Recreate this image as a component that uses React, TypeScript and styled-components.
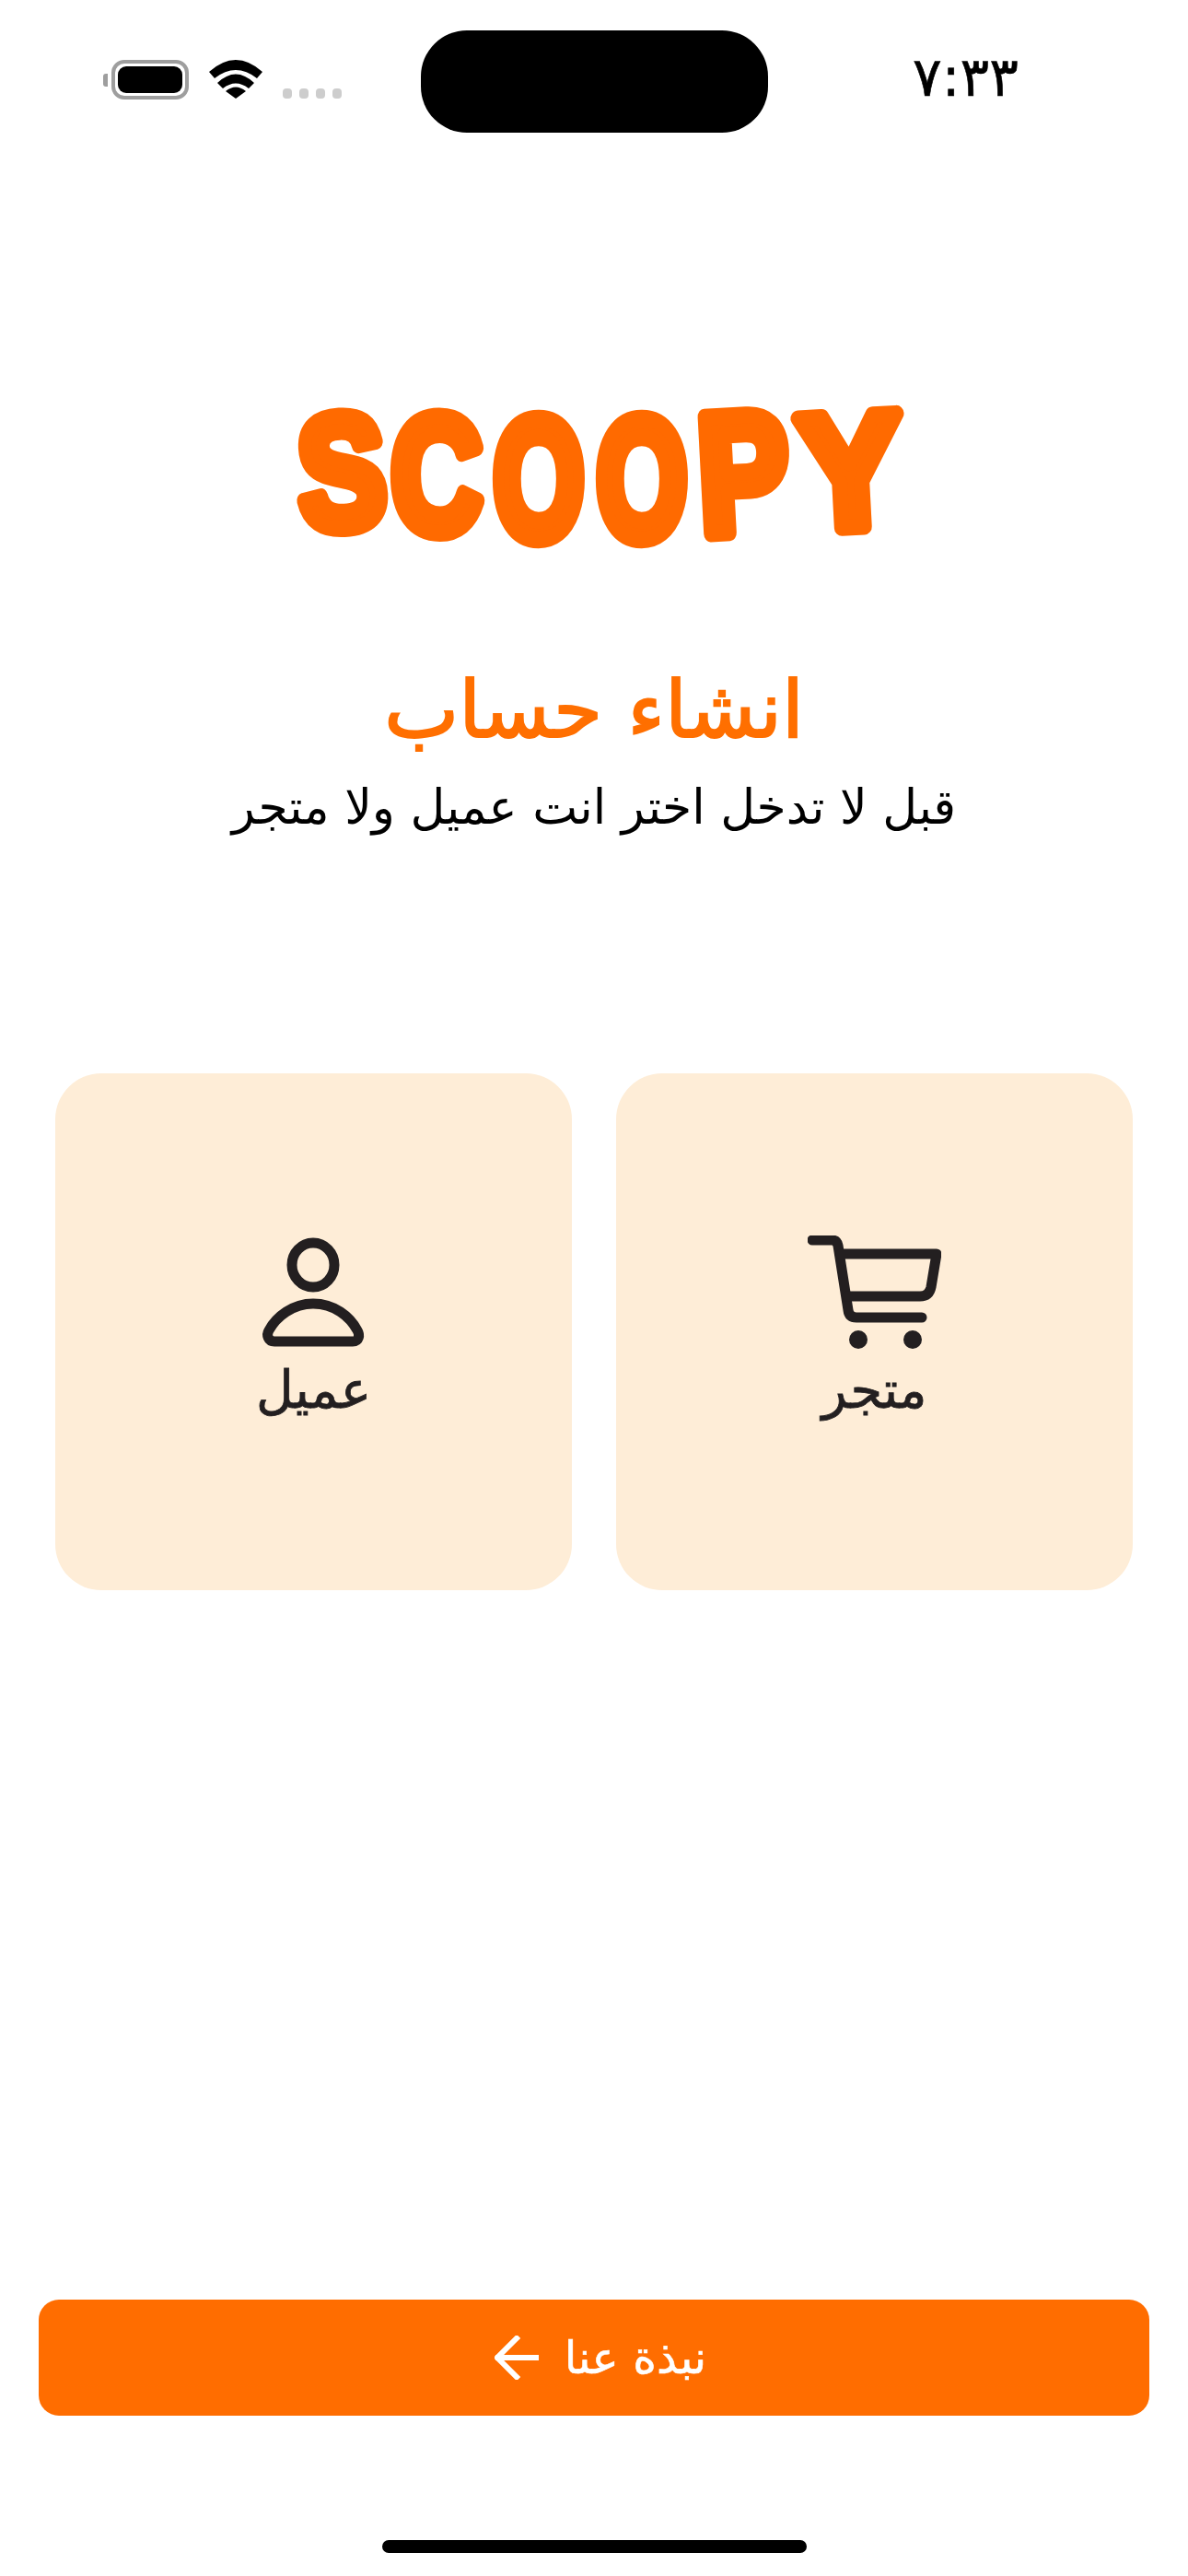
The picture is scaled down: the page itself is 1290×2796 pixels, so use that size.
import React from "react";
import styled, { createGlobalStyle } from "styled-components";

const GlobalStyle = createGlobalStyle`
  html, body {
    margin: 0;
    padding: 0;
    background: #ffffff;
  }
`;

const LOGO_LETTERS = [
  { ch: "S", cx: 46, cy: 73, sx: 1.42, sy: 1.74, rot: -3 },
  { ch: "C", cx: 149, cy: 75, sx: 1.36, sy: 1.8, rot: 0 },
  { ch: "O", cx: 260, cy: 80, sx: 1.26, sy: 1.86, rot: 0 },
  { ch: "O", cx: 372, cy: 80, sx: 1.26, sy: 1.86, rot: 0 },
  { ch: "P", cx: 482, cy: 74, sx: 1.46, sy: 1.84, rot: -3 },
  { ch: "Y", cx: 598, cy: 72, sx: 1.68, sy: 1.76, rot: -3 },
];

const Logo: React.FC = () => (
  <LogoSvg viewBox="0 0 660 158" role="img" aria-label="SCOOPY">
    {LOGO_LETTERS.map((l, i) => (
      <LogoLetter
        key={i}
        textAnchor="middle"
        transform={`translate(${l.cx} ${l.cy}) rotate(${l.rot}) scale(${l.sx} ${l.sy})`}
        y={36}
      >
        {l.ch}
      </LogoLetter>
    ))}
  </LogoSvg>
);

const Wifi: React.FC = () => (
  <svg width="58" height="42" viewBox="0 0 58 42" fill="#000">
    <path d="M0 13Q29-13 58 13L52 20Q29 2 6 20Z" />
    <path d="M9 25Q29 6 49 25L43 31Q29 20 15 31Z" />
    <path d="M18 34Q29 25 40 34L29 42Z" />
  </svg>
);

const CartIcon: React.FC = () => (
  <svg width="145" height="124" viewBox="0 0 145 124" fill="none" stroke="#231f20" strokeWidth="11" strokeLinecap="round" strokeLinejoin="round">
    <path d="M5 5H26Q32 5 33 11L44 81Q45 89 53 89H124" />
    <path d="M36 20H140L134 56Q132 66 122 66H43" />
    <circle cx="55" cy="113" r="10" fill="#231f20" stroke="none" />
    <circle cx="114" cy="113" r="10" fill="#231f20" stroke="none" />
  </svg>
);

const PersonIcon: React.FC = () => (
  <svg width="145" height="124" viewBox="0 0 145 124" fill="none" stroke="#231f20" strokeWidth="11" strokeLinejoin="round">
    <ellipse cx="72" cy="32" rx="23" ry="24" />
    <path d="M30 115H115C122 115 123 108 120 103C112 88 95 74 72 74C50 74 32 88 24 103C21 108 23 115 30 115Z" />
  </svg>
);

const ArrowIcon: React.FC = () => (
  <svg width="48" height="48" viewBox="0 0 48 48" fill="none" stroke="#ffffff" strokeWidth="6" strokeLinecap="square">
    <path d="M46 24H4" />
    <path d="M24 3L3 24L24 45" />
  </svg>
);

const App: React.FC = () => {
  return (
    <Page dir="rtl">
      <GlobalStyle />
      <StatusBar>
        <Time>٧:٣٣</Time>
        <Island />
        <StatusIcons>
          <SignalDots>
            <Dot />
            <Dot />
            <Dot />
            <Dot />
          </SignalDots>
          <Wifi />
          <Battery>
            <BatteryShell>
              <BatteryLevel />
            </BatteryShell>
            <BatteryNub />
          </Battery>
        </StatusIcons>
      </StatusBar>

      <Logo />

      <Title>انشاء حساب</Title>
      <Subtitle>قبل لا تدخل اختر انت عميل ولا متجر</Subtitle>

      <Choices>
        <Choice>
          <CartIcon />
          <ChoiceLabel>متجر</ChoiceLabel>
        </Choice>
        <Choice>
          <PersonIcon />
          <ChoiceLabel>عميل</ChoiceLabel>
        </Choice>
      </Choices>

      <AboutButton>
        نبذة عنا
        <ArrowIcon />
      </AboutButton>
      <HomeBar />
    </Page>
  );
};

export default App;

const Page = styled.div`
  display: flex;
  flex-direction: column;
  align-items: center;
  width: 1290px;
  height: 2796px;
  overflow: hidden;
  background: #ffffff;
  color: #231f20;
  font-family: "DejaVu Sans", sans-serif;
`;

const StatusBar = styled.div`
  display: grid;
  grid-template-columns: 1fr 377px 1fr;
  width: 100%;
  padding-top: 33px;
`;

const Time = styled.div`
  justify-self: start;
  margin: 21px 184px 0 0;
  font-size: 59px;
  line-height: 60px;
  color: #000000;
  -webkit-text-stroke: 0.6px #000000;
`;

const Island = styled.div`
  height: 111px;
  border-radius: 50px;
  background: #000000;
`;

const StatusIcons = styled.div`
  display: flex;
  align-items: flex-start;
  justify-content: flex-end;
  gap: 22px;
  margin: 32px 0 0 112px;
`;

const SignalDots = styled.div`
  display: flex;
  gap: 8px;
  margin-top: 31px;
`;

const Dot = styled.span`
  width: 10px;
  height: 11px;
  border-radius: 4px;
  background: #cdcdcd;
`;

const Battery = styled.div`
  display: flex;
  align-items: center;
  gap: 4px;
`;

const BatteryShell = styled.div`
  display: flex;
  align-items: center;
  justify-content: center;
  box-sizing: border-box;
  width: 84px;
  height: 43px;
  border: 4px solid #9e9e9e;
  border-radius: 14px;
`;

const BatteryLevel = styled.div`
  width: 70px;
  height: 29px;
  border-radius: 9px;
  background: #000000;
`;

const BatteryNub = styled.div`
  width: 5px;
  height: 14px;
  border-radius: 3px 0 0 3px;
  background: #9e9e9e;
`;

const LogoSvg = styled.svg`
  flex: none;
  width: 660px;
  height: 158px;
  margin: 293px 0 0 19px;
  overflow: visible;
  direction: ltr;
`;

const LogoLetter = styled.text`
  font-family: "Liberation Sans", sans-serif;
  font-size: 100px;
  font-weight: 700;
  fill: #ff6a00;
  stroke: #ff6a00;
  stroke-width: 10px;
  stroke-linejoin: round;
`;

const Title = styled.h1`
  margin: 130px 0 0;
  font-size: 86px;
  line-height: 90px;
  font-weight: 400;
  color: #ff6f00;
  -webkit-text-stroke: 2px #ff6f00;
`;

const Subtitle = styled.p`
  margin: 26px 0 0;
  font-size: 52px;
  line-height: 70px;
  font-weight: 400;
  color: #000000;
`;

const Choices = styled.div`
  display: grid;
  grid-template-columns: repeat(2, 561px);
  gap: 48px;
  margin-top: 254px;
`;

const Choice = styled.div`
  display: flex;
  flex-direction: column;
  align-items: center;
  justify-content: center;
  box-sizing: border-box;
  height: 561px;
  padding-bottom: 12px;
  border-radius: 50px;
  background: #feedd7;
`;

const ChoiceLabel = styled.div`
  margin-top: 14px;
  font-size: 56px;
  line-height: 60px;
  color: #231f20;
  -webkit-text-stroke: 0.8px #231f20;
`;

const AboutButton = styled.div`
  display: flex;
  align-items: center;
  justify-content: center;
  gap: 28px;
  box-sizing: border-box;
  width: 1206px;
  height: 126px;
  margin-top: auto;
  padding-left: 14px;
  border-radius: 22px;
  background: #ff6d00;
  color: #ffffff;
  font-size: 49px;
  -webkit-text-stroke: 0.6px #ffffff;
`;

const HomeBar = styled.div`
  width: 461px;
  height: 14px;
  margin: 135px 0 25px;
  border-radius: 7px;
  background: #000000;
`;
